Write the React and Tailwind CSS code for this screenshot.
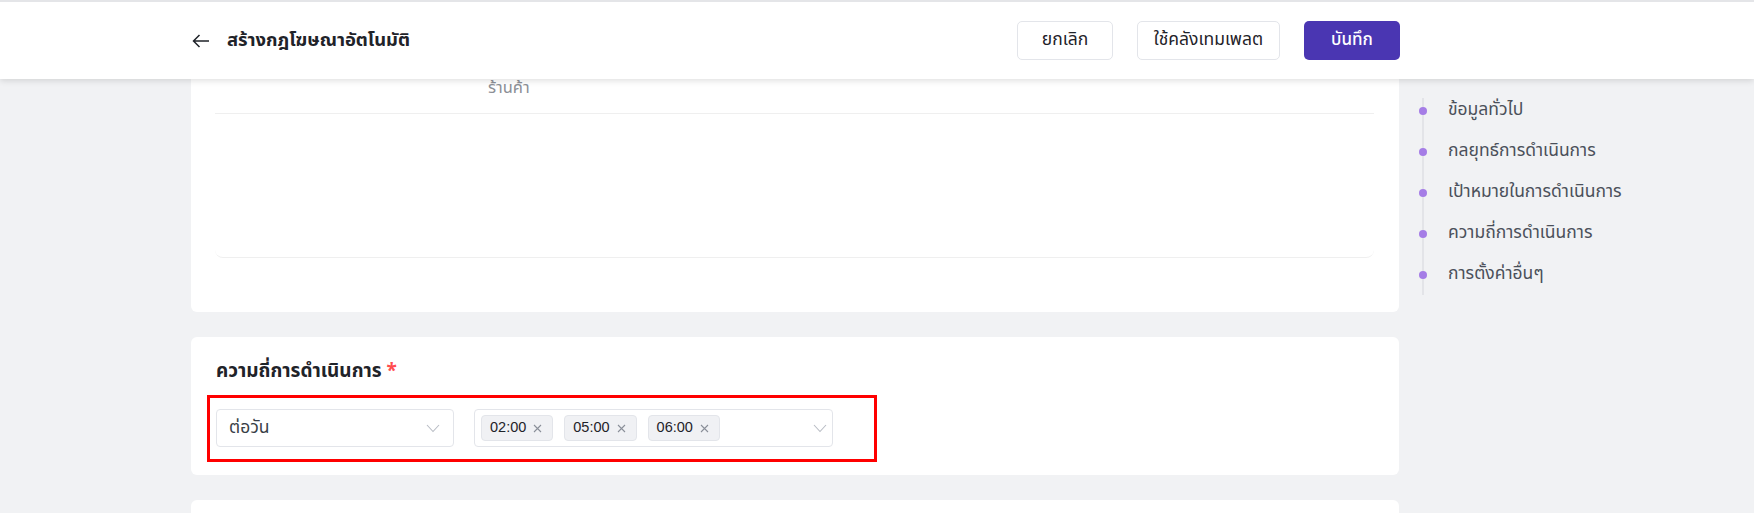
import React from 'react';

const thai = "font-['Noto_Sans_Thai','Noto_Sans_Thai_UI','Noto_Sans','Liberation_Sans',sans-serif]";

function Chevron() {
  return (
    <svg width="14" height="9" viewBox="0 0 14 9" fill="none" className="shrink-0">
      <polyline points="1,1 7,7.5 13,1" stroke="#b8bcc4" strokeWidth="1.1" />
    </svg>
  );
}

function Tag({ label }) {
  return (
    <span className="flex h-[26px] items-center gap-[7px] rounded-[4px] border border-[#e3e5ea] bg-[#f0f1f4] pl-[8px] pr-[10px] font-['Liberation_Sans',sans-serif] text-[14.5px] text-[#1f2329]">
      {label}
      <svg width="9" height="9" viewBox="0 0 9 9" fill="none">
        <path d="M1 1L8 8M8 1L1 8" stroke="#8a8f99" strokeWidth="1.1" />
      </svg>
    </span>
  );
}

const navItems = [
  'ข้อมูลทั่วไป',
  'กลยุทธ์การดำเนินการ',
  'เป้าหมายในการดำเนินการ',
  'ความถี่การดำเนินการ',
  'การตั้งค่าอื่นๆ',
];

export default function App() {
  return (
    <div className={`h-[513px] w-[1754px] overflow-hidden bg-[#f1f2f4] ${thai}`}>
      <header className="relative z-10 h-[79px] border-t-2 border-[#e4e5e8] bg-white shadow-[0_2px_6px_rgba(0,0,0,0.12)]">
        <div className="flex h-full items-center pl-[192px] pr-[354px]">
          <svg width="18" height="14" viewBox="0 0 18 14" fill="none" className="shrink-0">
            <path d="M17 7H1.5M7.5 1L1.5 7L7.5 13" stroke="#1f2329" strokeWidth="1.5" />
          </svg>
          <h1 className="ml-[17px] text-[18.4px] font-bold text-[#1f2329]">สร้างกฎโฆษณาอัตโนมัติ</h1>
          <div className="ml-auto flex items-center gap-6">
            <button className="h-[39px] w-[96px] rounded-[5px] border border-[#e3e5ea] bg-white text-[17.5px] text-[#1f2329]">
              ยกเลิก
            </button>
            <button className="h-[39px] w-[143px] rounded-[5px] border border-[#e3e5ea] bg-white text-[17.5px] text-[#1f2329]">
              ใช้คลังเทมเพลต
            </button>
            <button className="h-[39px] w-[96px] rounded-[5px] bg-[#4a36b2] text-[17px] font-medium text-white">
              บันทึก
            </button>
          </div>
        </div>
      </header>

      <div className="flex pl-[191px]">
        <main className="w-[1208px] shrink-0">
          <section className="rounded-b-md bg-white pb-[54px] pl-[24px] pr-[25px]">
            <div className="h-[35px] border-b border-[#efefef] pl-[273px] text-[16.5px] leading-[18px] text-[#8c8f96]">
              ร้านค้า
            </div>
            <div className="h-[144px] rounded-b-lg border-b border-[#efefef]" />
          </section>

          <section className="mt-[25px] rounded-md bg-white pb-[13px] pl-[16px] pr-[24px] pt-[22px]">
            <h2 className="pl-[9px] text-[19px] font-bold leading-[26px] text-[#1f2329]">
              ความถี่การดำเนินการ <span className="text-[#ff4d4f]">*</span>
            </h2>
            <div className="mt-[10px] w-[670px] border-[3px] border-[#ff0000] pb-[12px] pl-[6px] pt-[11px]">
              <div className="flex items-center gap-[20px]">
                <div className="flex h-[38px] w-[238px] items-center justify-between rounded-[4px] border border-[#e3e5ea] bg-white pl-[12px] pr-[13px] text-[17.5px] text-[#3a3f47]">
                  <span>ต่อวัน</span>
                  <Chevron />
                </div>
                <div className="flex h-[38px] w-[359px] items-center rounded-[4px] border border-[#e3e5ea] bg-white pl-[6px] pr-[5px]">
                  <div className="flex gap-[11px]">
                    <Tag label="02:00" />
                    <Tag label="05:00" />
                    <Tag label="06:00" />
                  </div>
                  <div className="ml-auto">
                    <Chevron />
                  </div>
                </div>
              </div>
            </div>
          </section>

          <section className="mt-[25px] h-[40px] rounded-t-md bg-white" />
        </main>

        <nav className="relative ml-[20px] pt-[11px]">
          <div className="absolute left-[3px] top-[19px] h-[197px] w-[2px] bg-[#e3e4e8]" />
          {navItems.map((item) => (
            <div key={item} className="relative flex h-[41px] items-center">
              <span className="h-2 w-2 shrink-0 rounded-full bg-[#a57de6]" />
              <span className="ml-[21px] whitespace-nowrap text-[17.5px] text-[#4b505a]">{item}</span>
            </div>
          ))}
        </nav>
      </div>
    </div>
  );
}
